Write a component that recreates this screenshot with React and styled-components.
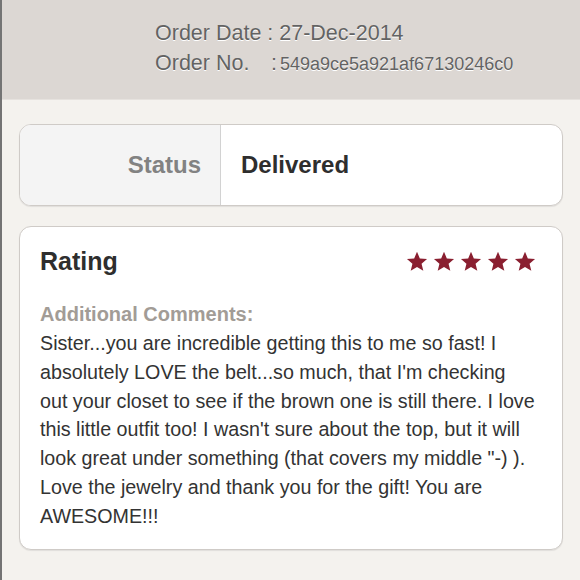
import React from "react";
import styled, { createGlobalStyle } from "styled-components";

const GlobalStyle = createGlobalStyle`
  html, body {
    margin: 0;
    padding: 0;
    background: #f4f2ee;
    font-family: 'Liberation Sans', Arial, sans-serif;
  }
`;

const Page = styled.div`
  width: 580px;
  height: 580px;
  box-sizing: border-box;
  border-left: 2px solid #747474;
  background: #f4f2ee;
  overflow: hidden;
`;

const Header = styled.div`
  height: 100px;
  background: #dcd7d3;
  box-sizing: border-box;
  padding: 21px 0 0 153px;
  border-bottom: 1px solid #e6e2de;
`;

const HeaderLine = styled.div`
  display: flex;
  align-items: baseline;
  height: 30px;
  font-size: 21.5px;
  color: #636363;
  text-shadow: 0 1px 0 #fff;
`;

const HeaderLabel = styled.span`
  width: ${p => p.w || "auto"};
`;

const OrderNo = styled.span`
  font-size: 18px;
  margin-left: 3px;
`;

const Content = styled.div`
  padding: 24px 17px 0 17px;
  display: flex;
  flex-direction: column;
  gap: 20px;
`;

const Card = styled.div`
  background: #fff;
  border: 1px solid #cfcbc7;
  border-radius: 12px;
  box-shadow: 0 1px 1px rgba(0, 0, 0, 0.08);
  overflow: hidden;
`;

const StatusRow = styled(Card)`
  display: flex;
  height: 80px;
`;

const StatusLabel = styled.div`
  width: 201px;
  box-sizing: border-box;
  background: #f4f4f4;
  border-right: 1px solid #d2d2d2;
  display: flex;
  align-items: center;
  justify-content: flex-end;
  padding-right: 19px;
  font-size: 24px;
  font-weight: bold;
  color: #828282;
`;

const StatusValue = styled.div`
  display: flex;
  align-items: center;
  padding-left: 20px;
  font-size: 24px;
  font-weight: bold;
  color: #2e2e2e;
`;

const RatingCard = styled(Card)`
  padding: 18px 20px 22px 20px;
  height: 324px;
  box-sizing: border-box;
`;

const RatingHead = styled.div`
  display: flex;
  justify-content: space-between;
  align-items: center;
  height: 32px;
  padding-right: 6px;
`;

const Title = styled.div`
  font-size: 25px;
  font-weight: bold;
  color: #2e2e2e;
`;

const Stars = styled.div`
  display: flex;
  gap: 5px;
`;

const CommentLabel = styled.div`
  margin-top: 25px;
  font-size: 20px;
  font-weight: bold;
  color: #a29c96;
  line-height: 24px;
`;

const Comment = styled.div`
  font-size: 19.7px;
  line-height: 28.8px;
  color: #333;
  margin-top: 3px;
  white-space: nowrap;
`;

const Line = styled.span`
  display: block;
`;

const lines = [
  "Sister...you are incredible getting this to me so fast! I",
  "absolutely LOVE the belt...so much, that I'm checking",
  "out your closet to see if the brown one is still there. I love",
  "this little outfit too! I wasn't sure about the top, but it will",
  "look great under something (that covers my middle \"-) ).",
  "Love the jewelry and thank you for the gift! You are",
  "AWESOME!!!",
];

const Star = () => (
  <svg width="22" height="21" viewBox="0 0 24 23">
    <path
      d="M12 0.8l3.1 7.3 7.9 0.6-6 5.2 1.9 7.7L12 17.5l-6.9 4.1 1.9-7.7-6-5.2 7.9-0.6z"
      fill="#8a1f30"
    />
  </svg>
);

export default function App() {
  return (
    <Page>
      <GlobalStyle />
      <Header>
        <HeaderLine>
          <HeaderLabel>Order Date : 27-Dec-2014</HeaderLabel>
        </HeaderLine>
        <HeaderLine>
          <HeaderLabel w="116px">Order No.</HeaderLabel>
          <span>:</span>
          <OrderNo>549a9ce5a921af67130246c0</OrderNo>
        </HeaderLine>
      </Header>
      <Content>
        <StatusRow>
          <StatusLabel>Status</StatusLabel>
          <StatusValue>Delivered</StatusValue>
        </StatusRow>
        <RatingCard>
          <RatingHead>
            <Title>Rating</Title>
            <Stars>
              {[0, 1, 2, 3, 4].map(i => <Star key={i} />)}
            </Stars>
          </RatingHead>
          <CommentLabel>Additional Comments:</CommentLabel>
          <Comment>
            {lines.map((l, i) => <Line key={i}>{l}</Line>)}
          </Comment>
        </RatingCard>
      </Content>
    </Page>
  );
}
